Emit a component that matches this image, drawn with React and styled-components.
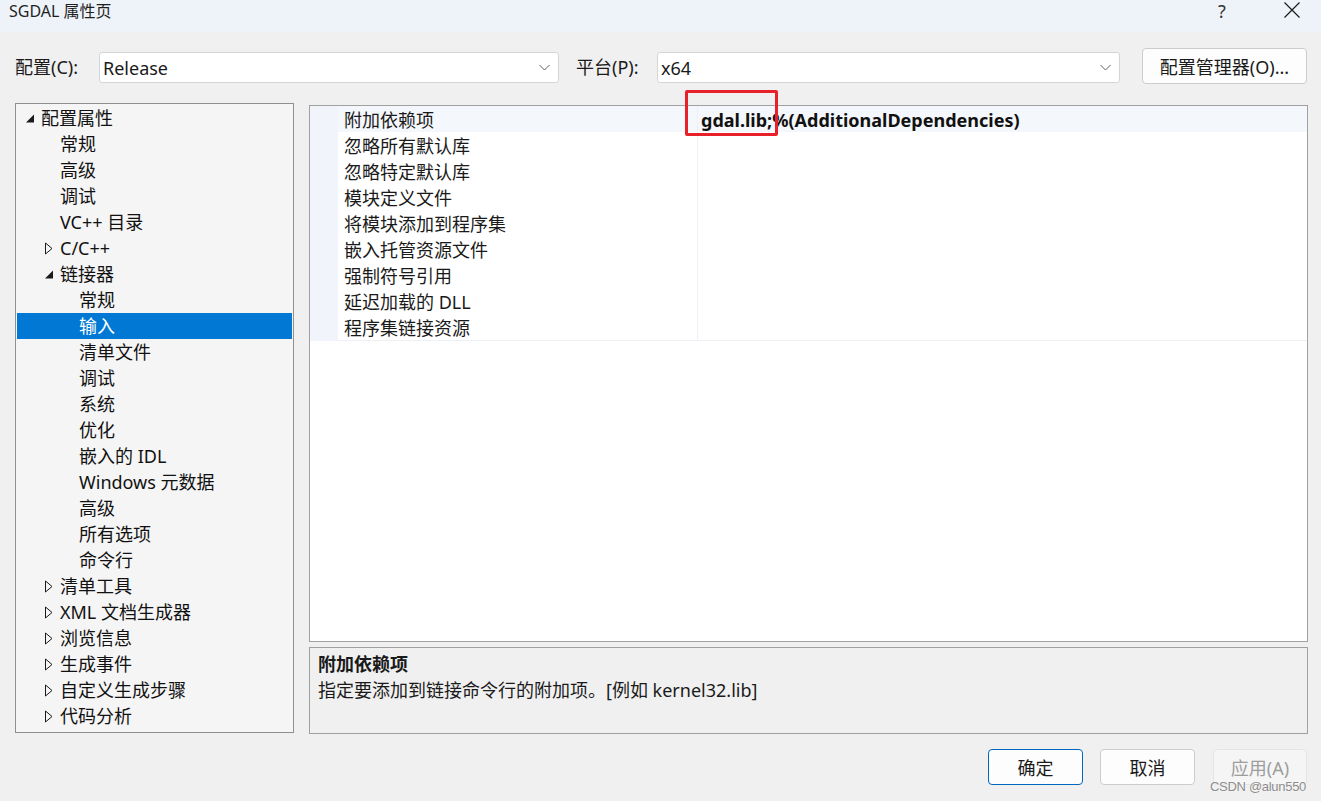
import React from "react";
import styled, { createGlobalStyle } from "styled-components";

const Global = createGlobalStyle`
  html, body { margin: 0; padding: 0; }
  body {
    font-family: "Noto Sans", "Noto Sans CJK SC", sans-serif;
    background: #f0f0f0;
  }
  * { box-sizing: border-box; }
`;

const Window = styled.div`
  position: relative;
  width: 1321px;
  height: 801px;
  background: #f0f0f0;
  display: flex;
  flex-direction: column;
  overflow: hidden;
  color: #1a1a1a;
`;

const TitleBar = styled.div`
  height: 32px;
  flex: none;
  background: #eef3f9;
  display: flex;
  align-items: flex-start;
  padding-left: 9px;
  font-size: 16px;
  color: #1f1f1f;
`;

const Title = styled.div`
  flex: 1;
  line-height: 22px;
`;

const HelpButton = styled.div`
  width: 24px;
  height: 24px;
  margin-right: 29px;
  text-align: center;
  font-size: 18px;
  line-height: 22px;
  font-family: "Noto Sans", sans-serif;
  color: #333;
`;

const CloseButton = styled.div`
  width: 58px;
  height: 20px;
  display: flex;
  align-items: center;
  justify-content: center;
`;

const ConfigRow = styled.div`
  display: flex;
  align-items: center;
  height: 36px;
  margin-top: 16px;
  padding-left: 15px;
  font-size: 18px;
  flex: none;
`;

const FieldLabel = styled.div`
  width: ${(p) => p.$w}px;
  margin-left: ${(p) => p.$ml || 0}px;
  line-height: 26px;
  margin-top: 2px;
`;

const Combo = styled.div`
  width: ${(p) => p.$w}px;
  height: 31px;
  margin-top: 3px;
  background: #fff;
  border: 1px solid #d5d5d5;
  border-radius: 3px;
  display: flex;
  align-items: center;
  padding: 0 8px 0 3px;
  font-size: 18px;
`;

const ComboText = styled.div`
  flex: 1;
  line-height: 26px;
`;

const PushButton = styled.button`
  width: ${(p) => p.$w}px;
  height: 36px;
  margin-left: ${(p) => p.$ml || 0}px;
  border-radius: 4px;
  font-family: inherit;
  font-size: 18px;
  padding: 0;
  display: flex;
  align-items: center;
  justify-content: center;
  background: ${(p) => (p.$disabled ? "#f5f5f5" : "#fdfdfd")};
  border: 1px solid
    ${(p) => (p.$primary ? "#0067c0" : p.$disabled ? "#e5e5e5" : "#cccccc")};
  color: ${(p) => (p.$disabled ? "#9d9d9d" : "#1a1a1a")};
`;

const Main = styled.div`
  display: flex;
  align-items: flex-start;
  gap: 15px;
  margin-top: 19px;
  padding-left: 15px;
  flex: none;
`;

const TreePanel = styled.div`
  width: 279px;
  height: 630px;
  border: 1px solid #8f8f94;
  background: #f5f5f5;
  padding: 1px;
  font-size: 18px;
`;

const TreeRow = styled.div`
  height: 26px;
  display: flex;
  align-items: center;
  padding-left: ${(p) => 5 + p.$level * 19}px;
  background: ${(p) => (p.$selected ? "#0078d4" : "transparent")};
  color: ${(p) => (p.$selected ? "#ffffff" : "#111111")};
  white-space: nowrap;
`;

const Toggle = styled.span`
  width: 19px;
  height: 26px;
  flex: none;
  display: flex;
  align-items: center;
`;

const RowText = styled.span`
  line-height: 26px;
`;

const RightColumn = styled.div`
  width: 999px;
  margin-top: 2px;
  display: flex;
  flex-direction: column;
  gap: 5px;
`;

const Grid = styled.div`
  height: 537px;
  background: #ffffff;
  border: 1px solid #a0a0a0;
  font-size: 18px;
`;

const GridRow = styled.div`
  display: grid;
  grid-template-columns: 28px 359px 1fr;
  height: 26px;
`;

const Gutter = styled.div`
  background: #f1f4fa;
`;

const NameCell = styled.div`
  background: ${(p) => (p.$active ? "#f4f7fb" : "#ffffff")};
  border-bottom: 1px solid #edf1f6;
  padding: 2px 0 0 6px;
  line-height: 24px;
  white-space: nowrap;
`;

const ValueCell = styled.div`
  background: ${(p) => (p.$active ? "#f4f7fb" : "#ffffff")};
  border-bottom: 1px solid #edf1f6;
  border-left: 1px solid #edf1f6;
  padding: 2px 0 0 3px;
  line-height: 24px;
  font-weight: 700;
  color: #111;
  white-space: nowrap;
`;

const Desc = styled.div`
  height: 87px;
  border: 1px solid #a0a0a0;
  background: #f0f0f0;
  padding: 3px 8px;
  font-size: 18px;
  line-height: 26px;
`;

const DescTitle = styled.div`
  font-weight: 700;
`;

const Footer = styled.div`
  display: flex;
  justify-content: flex-end;
  padding: 15px 14px 0 0;
  flex: none;
`;

const Highlight = styled.div`
  position: absolute;
  left: 685px;
  top: 90px;
  width: 93px;
  height: 46px;
  border: 3px solid #e8202a;
  border-radius: 2px;
  pointer-events: none;
`;

const Watermark = styled.div`
  position: absolute;
  right: 15px;
  bottom: 7px;
  font-family: "Liberation Sans", Arial, sans-serif;
  font-size: 13px;
  letter-spacing: -0.3px;
  color: #8c8c8c;
  text-shadow: 0 0 2px #fff;
`;

const Chevron = () => (
  <svg width="11" height="7" viewBox="0 0 11 7">
    <path d="M0.5 1 L5.5 6 L10.5 1" fill="none" stroke="#606060" strokeWidth="1" />
  </svg>
);

const Expanded = () => (
  <svg width="12" height="12" viewBox="0 0 12 12" style={{ marginLeft: 2, marginTop: 2 }}>
    <polygon points="10,1.5 10,9.5 2,9.5" fill="#1a1a1a" />
  </svg>
);

const Collapsed = () => (
  <svg width="12" height="13" viewBox="0 0 12 13" style={{ marginLeft: 4 }}>
    <polygon points="0.5,1 7,6.5 0.5,12" fill="none" stroke="#1a1a1a" strokeWidth="1" />
  </svg>
);

const CloseIcon = () => (
  <svg width="16" height="16" viewBox="0 0 16 16">
    <path d="M0.5 0.5 L15.5 15.5 M15.5 0.5 L0.5 15.5" stroke="#1a1a1a" strokeWidth="1.2" />
  </svg>
);

const tree = [
  { t: "配置属性", l: 0, s: "open" },
  { t: "常规", l: 1 },
  { t: "高级", l: 1 },
  { t: "调试", l: 1 },
  { t: "VC++ 目录", l: 1 },
  { t: "C/C++", l: 1, s: "closed" },
  { t: "链接器", l: 1, s: "open" },
  { t: "常规", l: 2 },
  { t: "输入", l: 2, sel: true },
  { t: "清单文件", l: 2 },
  { t: "调试", l: 2 },
  { t: "系统", l: 2 },
  { t: "优化", l: 2 },
  { t: "嵌入的 IDL", l: 2 },
  { t: "Windows 元数据", l: 2 },
  { t: "高级", l: 2 },
  { t: "所有选项", l: 2 },
  { t: "命令行", l: 2 },
  { t: "清单工具", l: 1, s: "closed" },
  { t: "XML 文档生成器", l: 1, s: "closed" },
  { t: "浏览信息", l: 1, s: "closed" },
  { t: "生成事件", l: 1, s: "closed" },
  { t: "自定义生成步骤", l: 1, s: "closed" },
  { t: "代码分析", l: 1, s: "closed" },
];

const props = [
  ["附加依赖项", "gdal.lib;%(AdditionalDependencies)"],
  ["忽略所有默认库", ""],
  ["忽略特定默认库", ""],
  ["模块定义文件", ""],
  ["将模块添加到程序集", ""],
  ["嵌入托管资源文件", ""],
  ["强制符号引用", ""],
  ["延迟加载的 DLL", ""],
  ["程序集链接资源", ""],
];

export default function App() {
  return (
    <>
      <Global />
      <Window>
        <TitleBar>
          <Title>SGDAL 属性页</Title>
          <HelpButton>?</HelpButton>
          <CloseButton>
            <CloseIcon />
          </CloseButton>
        </TitleBar>

        <ConfigRow>
          <FieldLabel $w={84}>配置(C):</FieldLabel>
          <Combo $w={460}>
            <ComboText>Release</ComboText>
            <Chevron />
          </Combo>
          <FieldLabel $w={81} $ml={17}>平台(P):</FieldLabel>
          <Combo $w={463}>
            <ComboText>x64</ComboText>
            <Chevron />
          </Combo>
          <PushButton $w={165} $ml={22}>配置管理器(O)...</PushButton>
        </ConfigRow>

        <Main>
          <TreePanel>
            {tree.map((n, i) => (
              <TreeRow key={i} $level={n.l} $selected={n.sel}>
                <Toggle>
                  {n.s === "open" && <Expanded />}
                  {n.s === "closed" && <Collapsed />}
                </Toggle>
                <RowText>{n.t}</RowText>
              </TreeRow>
            ))}
          </TreePanel>

          <RightColumn>
            <Grid>
              {props.map(([name, value], i) => (
                <GridRow key={i}>
                  <Gutter />
                  <NameCell $active={i === 0}>{name}</NameCell>
                  <ValueCell $active={i === 0}>{value}</ValueCell>
                </GridRow>
              ))}
            </Grid>
            <Desc>
              <DescTitle>附加依赖项</DescTitle>
              <div>指定要添加到链接命令行的附加项。[例如 kernel32.lib]</div>
            </Desc>
          </RightColumn>
        </Main>

        <Footer>
          <PushButton $w={95} $primary>确定</PushButton>
          <PushButton $w={95} $ml={17}>取消</PushButton>
          <PushButton $w={94} $ml={18} $disabled>应用(A)</PushButton>
        </Footer>

        <Highlight />
        <Watermark>CSDN @alun550</Watermark>
      </Window>
    </>
  );
}
